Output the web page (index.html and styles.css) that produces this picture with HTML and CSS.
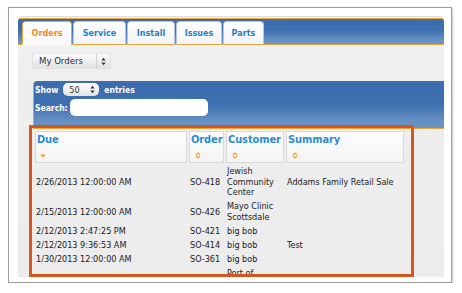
FILE: index.html
```html
<!DOCTYPE html>
<html lang="en">
<head>
    <meta charset="UTF-8">
    <title>Orders</title>
    <link rel="stylesheet" href="styles.css">
</head>
<body>
    <div class="frame">
        <div class="panel">
            <div class="tabbar">
                <div class="tab tab-orders active">Orders</div>
                <div class="tab tab-service">Service</div>
                <div class="tab tab-install">Install</div>
                <div class="tab tab-issues">Issues</div>
                <div class="tab tab-parts">Parts</div>
            </div>

            <div class="content">
                <div class="picker">
                    <span class="picker-label">My Orders</span>
                    <span class="picker-arrows">
                        <svg width="5" height="9" viewBox="0 0 5 9"><path d="M0.3 3.6L2.5 0.8L4.7 3.6z M0.3 5.4L2.5 8.2L4.7 5.4z" fill="#3a3a3a"/></svg>
                    </span>
                </div>

                <div class="filters">
                    <div class="filter-row">
                        <span>Show</span>
                        <span class="length">
                            <span>50</span>
                            <svg width="5" height="9" viewBox="0 0 5 9"><path d="M0.3 3.6L2.5 0.8L4.7 3.6z M0.3 5.4L2.5 8.2L4.7 5.4z" fill="#3a3a3a"/></svg>
                        </span>
                        <span>entries</span>
                    </div>
                    <div class="filter-row">
                        <span>Search:</span>
                        <span class="search"></span>
                    </div>
                </div>

                <table class="grid">
                    <colgroup>
                        <col class="c-due">
                        <col class="c-order">
                        <col class="c-customer">
                        <col class="c-summary">
                    </colgroup>
                    <thead>
                        <tr>
                            <th>Due<svg class="sort" width="6" height="4" viewBox="0 0 6 4"><path d="M0 0.5h6L3 3.5z" fill="#f39a2c"/></svg></th>
                            <th>Order<svg class="sort" width="6" height="7" viewBox="0 0 6 7"><path d="M1 3L3 1L5 3M1 4L3 6L5 4" stroke="#f0a040" stroke-width="1.2" fill="none"/></svg></th>
                            <th>Customer<svg class="sort" width="6" height="7" viewBox="0 0 6 7"><path d="M1 3L3 1L5 3M1 4L3 6L5 4" stroke="#f0a040" stroke-width="1.2" fill="none"/></svg></th>
                            <th>Summary<svg class="sort" width="6" height="7" viewBox="0 0 6 7"><path d="M1 3L3 1L5 3M1 4L3 6L5 4" stroke="#f0a040" stroke-width="1.2" fill="none"/></svg></th>
                        </tr>
                    </thead>
                    <tbody>
                        <tr><td>2/26/2013 12:00:00 AM</td><td>SO-418</td><td>Jewish Community Center</td><td>Addams Family Retail Sale</td></tr>
                        <tr><td>2/15/2013 12:00:00 AM</td><td>SO-426</td><td>Mayo Clinic Scottsdale</td><td></td></tr>
                        <tr><td>2/12/2013 2:47:25 PM</td><td>SO-421</td><td>big bob</td><td></td></tr>
                        <tr><td>2/12/2013 9:36:53 AM</td><td>SO-414</td><td>big bob</td><td>Test</td></tr>
                        <tr><td>1/30/2013 12:00:00 AM</td><td>SO-361</td><td>big bob</td><td></td></tr>
                        <tr><td></td><td></td><td>Port of</td><td></td></tr>
                    </tbody>
                </table>
            </div>
        </div>

        <!-- highlight drawn over the grid -->
        <div class="highlight"></div>
    </div>
</body>
</html>
```

FILE: styles.css
```css
body {
    margin: 0;
    background: #fff;
    font-family: "DejaVu Sans Condensed", "DejaVu Sans", sans-serif;
    font-stretch: condensed;
    color: #1a1a1a;
}
.frame {
    position: relative;
    box-sizing: border-box;
    width: 444px;
    height: 276px;
    margin: 7px 0 0 8px;
    padding: 8px 0 0 9px;
    border: 1px solid #9c9c9c;
    box-shadow: 1px 1px 2px rgba(0, 0, 0, 0.2);
}
.panel {
    width: 426px;
    height: 261px;
    overflow: hidden;
    border-top: 1px solid #dedede;
    border-radius: 4px 4px 0 0;
    background: linear-gradient(#f8f8f8, #efefef 40px, #ececec);
    box-sizing: border-box;
}
.tabbar {
    display: flex;
    align-items: flex-end;
    gap: 1px;
    box-sizing: border-box;
    height: 27px;
    margin-top: 1px;
    padding: 2px 0 0 4px;
    border-top: 1px solid #e9a43b;
    border-bottom: 1px solid #e9a43b;
    border-radius: 3px 3px 0 0;
    background: linear-gradient(#3b6cad, #3e6fb0 45%, #6891c4 85%, #6c95c7);
}
.tab {
    box-sizing: border-box;
    height: 24px;
    margin-bottom: -1px;
    border: 1px solid #b7c7dc;
    border-bottom-color: #e9a43b;
    border-radius: 4px 4px 0 0;
    background: linear-gradient(#ffffff, #f2f4f7);
    color: #2b7fc3;
    font-size: 9px;
    font-weight: bold;
    line-height: 22px;
    text-align: center;
}
.tab-orders { width: 50px; }
.tab-service { width: 53px; }
.tab-install { width: 48px; }
.tab-issues { width: 46px; }
.tab-parts { width: 41px; }
.tab.active {
    border-color: #e6a73f;
    border-bottom-color: #f8f8f8;
    background: linear-gradient(#ffffff, #f8f8f8);
    color: #f08b1e;
}
.content {
    padding: 9px 0 0 15px;
}
.picker {
    display: flex;
    width: 77px;
    height: 14px;
    background: linear-gradient(#fbfbfb, #e3e3e3);
    box-shadow: 0 0 0 1px #e2e2e2;
    font-size: 9.5px;
    line-height: 14px;
    color: #2a2a3a;
}
.picker-label {
    flex: 1;
    padding-left: 6px;
}
.picker-arrows {
    display: flex;
    align-items: center;
    justify-content: center;
    width: 13px;
    border-left: 1px solid #d0d0d0;
}
.filters {
    box-sizing: border-box;
    height: 48px;
    margin-top: 13px;
    padding: 2px 0 0 1px;
    border-left: 1px solid #d9a24a;
    border-bottom: 1px solid #e9a43b;
    border-radius: 4px 0 0 0;
    background: linear-gradient(#3c6dae, #3e6faf 50%, #6690c3 85%, #6a93c6);
    color: #fff;
    font-size: 8.5px;
    font-weight: bold;
}
.filter-row {
    display: flex;
    align-items: center;
    gap: 5px;
}
.filter-row + .filter-row {
    gap: 2px;
    margin-top: 3px;
}
.length {
    display: flex;
    align-items: center;
    justify-content: space-between;
    box-sizing: border-box;
    width: 36px;
    height: 13px;
    padding: 0 4px 0 6px;
    border-radius: 5px;
    background: linear-gradient(#ffffff, #e4e4e4);
    color: #333;
    font-weight: normal;
    font-size: 9px;
}
.search {
    width: 138px;
    height: 17px;
    border-radius: 5px;
    background: #fff;
}
.grid {
    table-layout: fixed;
    width: 373px;
    border-spacing: 2px;
}
.c-due { width: 152px; }
.c-order { width: 35px; }
.c-customer { width: 58px; }
.c-summary { width: 118px; }
.grid th {
    box-sizing: border-box;
    height: 32px;
    padding: 1px 0 0 1px;
    border: 1px solid #d9d9d9;
    background: linear-gradient(#fdfdfd, #f4f4f4);
    color: #2c8dd3;
    font-size: 11px;
    letter-spacing: -0.1px;
    line-height: 14px;
    text-align: left;
    vertical-align: top;
    white-space: nowrap;
}
.sort {
    display: block;
    margin: 5px 0 0 4px;
}
.grid th:first-child .sort {
    margin: 7px 0 0 3px;
}
.grid td {
    padding: 1px 1px 0.5px;
    font-size: 9px;
    line-height: 10.6px;
    vertical-align: middle;
}
.highlight {
    position: absolute;
    left: 20px;
    top: 117px;
    box-sizing: border-box;
    width: 385px;
    height: 152px;
    border: 3px solid #d4571c;
}
```
